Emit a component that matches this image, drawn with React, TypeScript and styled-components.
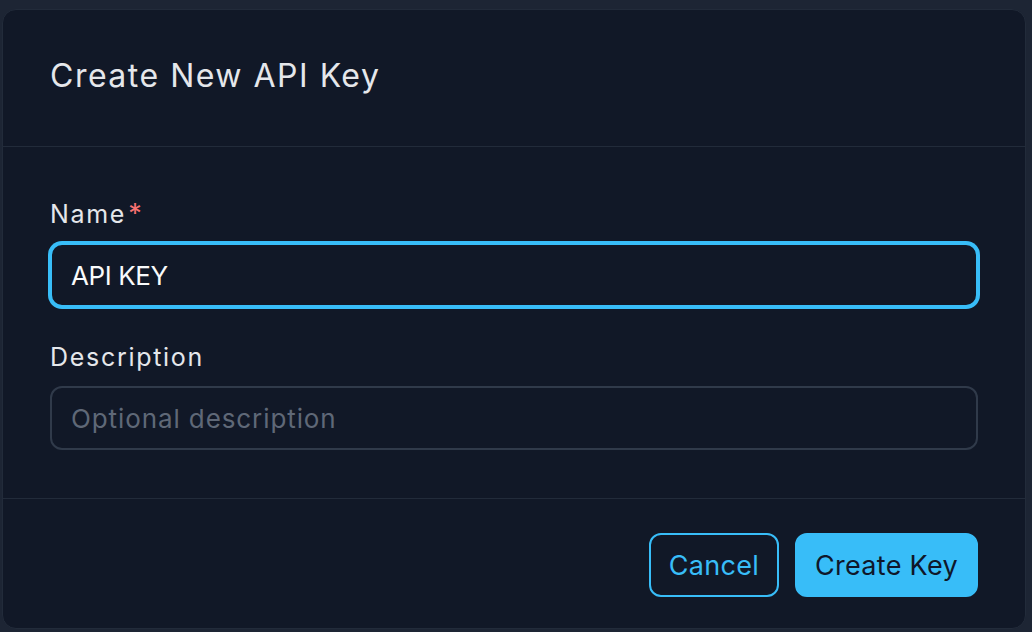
import React from "react";
import styled, { createGlobalStyle } from "styled-components";

const GlobalStyle = createGlobalStyle`
  html, body {
    margin: 0;
    padding: 0;
    background: #1d2534;
    font-family: "Inter", "Noto Sans", sans-serif;
  }
  * { box-sizing: border-box; }
`;

const Overlay = styled.div`
  width: 1032px;
  height: 632px;
  padding: 9px 6px 3px 2px;
  background: #1d2534;
  display: flex;
`;

const Modal = styled.div`
  flex: 1;
  display: flex;
  flex-direction: column;
  background: #111827;
  border: 1px solid #222b3a;
  border-radius: 14px;
  overflow: hidden;
`;

const Header = styled.div`
  padding: 48px 47px 52px;
  border-bottom: 1px solid #222b3a;
`;

const Title = styled.h2`
  margin: 0;
  font-size: 32px;
  line-height: 36px;
  font-weight: 400;
  letter-spacing: 1.5px;
  color: #e5e7eb;
`;

const Body = styled.div`
  padding: 51px 47px 48px;
  display: flex;
  flex-direction: column;
  gap: 34px;
`;

const Field = styled.div`
  display: flex;
  flex-direction: column;
  gap: 13px;
`;

const Label = styled.label`
  font-size: 25px;
  line-height: 32px;
  letter-spacing: 1.7px;
  color: #e5e7eb;
  display: flex;
  align-items: flex-start;
`;

const Required = styled.span`
  color: #f87171;
  font-size: 27px;
  line-height: 27px;
  margin-left: 2px;
  margin-top: 2px;
  letter-spacing: 0;
`;

const TextInput = styled.input<{ $focused?: boolean }>`
  height: 64px;
  width: 100%;
  padding: 0 19px;
  border-radius: 12px;
  background: #111827;
  border: 2px solid ${(p) => (p.$focused ? "#38bdf8" : "#303a4a")};
  box-shadow: ${(p) => (p.$focused ? "0 0 0 2px #38bdf8" : "none")};
  outline: none;
  color: #f9fafb;
  font-family: "Inter", "Noto Sans", sans-serif;
  font-size: 26px;
  letter-spacing: -0.4px;
  &::placeholder {
    color: #5f6877;
    letter-spacing: 0.9px;
  }
`;

const Footer = styled.div`
  border-top: 1px solid #222b3a;
  padding: 34px 47px 31px;
  display: flex;
  justify-content: flex-end;
  gap: 16px;
`;

const Button = styled.button<{ $variant: "outline" | "primary" }>`
  height: 64px;
  padding: 0 18px;
  border-radius: 12px;
  border: 2px solid #38bdf8;
  background: ${(p) => (p.$variant === "primary" ? "#38bdf8" : "transparent")};
  color: ${(p) => (p.$variant === "primary" ? "#0f172a" : "#38bdf8")};
  font-family: "Inter", "Noto Sans", sans-serif;
  font-size: 27px;
  letter-spacing: 0.3px;
  font-weight: 400;
  cursor: pointer;
`;

export default function App() {
  return (
    <>
      <GlobalStyle />
      <Overlay>
        <Modal>
          <Header>
            <Title>Create New API Key</Title>
          </Header>
          <Body>
            <Field>
              <Label>
                Name<Required>*</Required>
              </Label>
              <TextInput $focused readOnly value="API KEY" />
            </Field>
            <Field>
              <Label>Description</Label>
              <TextInput readOnly placeholder="Optional description" />
            </Field>
          </Body>
          <Footer>
            <Button $variant="outline">Cancel</Button>
            <Button $variant="primary">Create Key</Button>
          </Footer>
        </Modal>
      </Overlay>
    </>
  );
}
